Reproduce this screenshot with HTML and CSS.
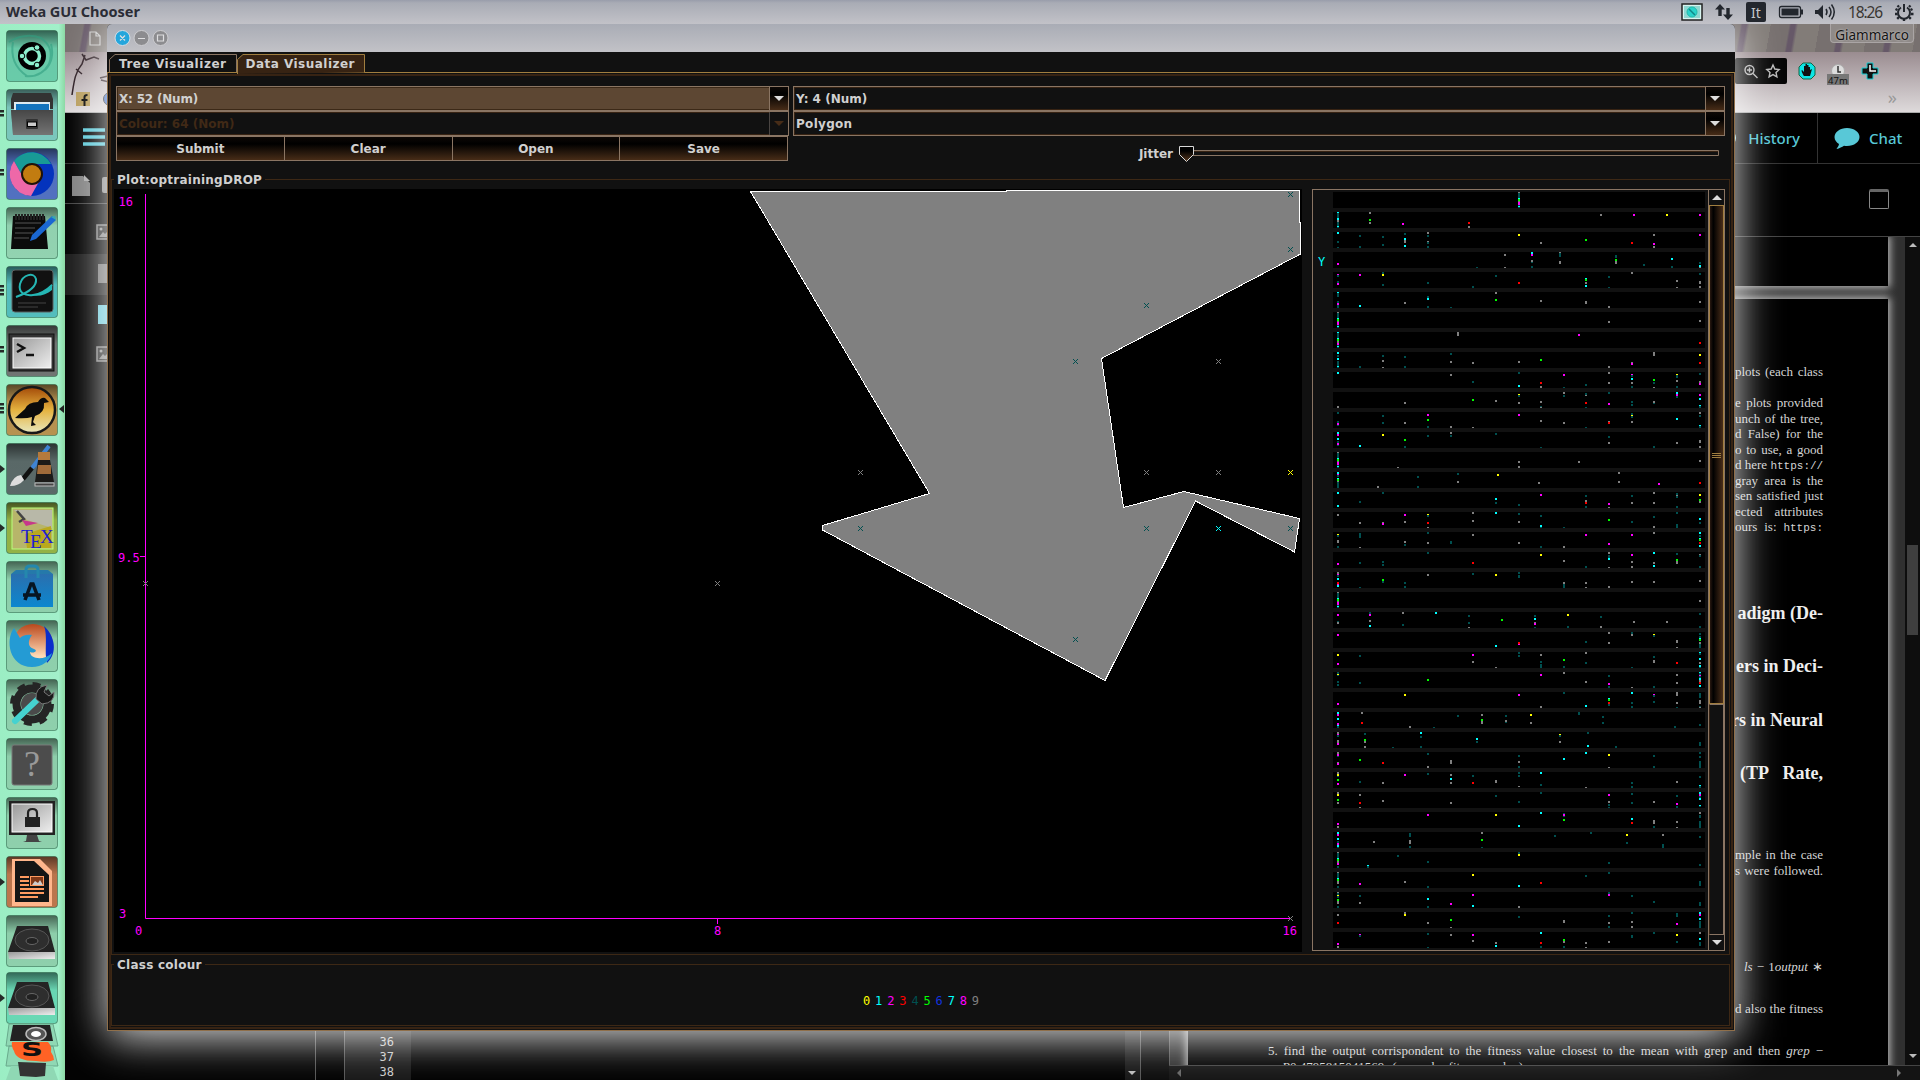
FILE: index.html
```html
<!DOCTYPE html>
<html lang="en">
<head>
<meta charset="utf-8">
<title>Weka GUI Chooser</title>
<link rel="stylesheet" href="styles.css">
</head>
<body>
<div class="desktop">

<div class="browser">
  <div class="wallpaper"><svg class="tabdoc" width="12" height="16" viewBox="0 0 12 16"><path d="M1 1h6l4 4v9H1zM7 1v4h4" fill="none" stroke="#ccc" stroke-width="1.2"/></svg><span class="user">Giammarco</span></div>
  <div class="toolbar">
    <svg class="sketch" width="44" height="61" viewBox="0 0 44 61"><path d="M7 43C9 30 10 20 17 12L20 3M17 2l4 6 8-3 5 2M11 17l6 5M35 26l8-2M36 28l8 2" fill="none" stroke="#2b1c22" stroke-width="1.5"/><rect x="11" y="40" width="14" height="14" fill="#b89d5c"/><path d="M19.500 54V45q0-2 3-2M16.500 48h6" stroke="#000" stroke-width="2" fill="none"/><circle cx="45" cy="47" r="6.500" fill="#4270c8" stroke="#333"/></svg>
    <div class="tools">
      <svg class="addr" width="52" height="26" viewBox="0 0 52 26"><rect width="52" height="26" rx="2" fill="#050505"/><g fill="none" stroke="#bbb" stroke-width="1.400"><circle cx="14.500" cy="12" r="4.500"/><path d="M18 15.500l4.500 4.500M12 12h5M14.500 9.500v5M38 7l1.800 4 4.400.5-3.200 3 .9 4.400L38 16.600l-3.900 2.300.9-4.400-3.200-3 4.400-.5z"/></g></svg>
      <svg width="110" height="34" viewBox="0 0 110 34"><path d="M6 5h8l4 4v8l-4 4H6l-4-4V9z" fill="#0de5e5" stroke="#164"/><path d="M7 18c-2-3-3-6-2-6l2 2V8h1.500V6H10v1h1.500v2H13v3l2-1-2 7z" fill="#111"/><circle cx="41" cy="13" r="6.500" fill="#ddd" stroke="#aaa"/><path d="M41 8v6h3" fill="none" stroke="#333" stroke-width="1.500"/><rect x="30" y="16" width="22" height="11" fill="#777"/><text x="41" y="25.500" font-size="9.500" text-anchor="middle" fill="#111">47m</text><path d="M70 5h6v5h5v6h-5v5h-6v-5h-5v-6h5z" fill="#111" stroke="#19cdd3"/><path d="M73 7v6h6" fill="none" stroke="#fff" stroke-width="1.500"/></svg>
      <span class="more">»</span>
    </div>
  </div>
  <div class="header">
    <svg width="22" height="20" viewBox="0 0 22 20"><path d="M0 2h22M0 9h22M0 16h22" stroke="#5bc8d8" stroke-width="3.500"/></svg>
    <div class="links"><svg class="clock" width="20" height="20" viewBox="0 0 20 20"><circle cx="10" cy="10" r="9" fill="#9adbe4"/></svg><span class="history">History</span><span class="chat"><svg width="26" height="23" viewBox="0 0 26 23"><path d="M13 1C6 1 .5 5 .5 10c0 3 2 5.500 4.500 7-.3 2-1.500 3.500-2.500 5 3-.5 5.500-2 7.500-3.200 9 1.200 15.500-3.300 15.500-8.800C25.500 5 20 1 13 1z" fill="#58c8d7"/></svg>Chat</span></div>
  </div>
  <div class="work">
    <div class="files">
      <div class="filebar"><svg width="46" height="22" viewBox="0 0 46 22"><path d="M0 1h11l7 7v13H0z" fill="#808080"/><path d="M12 0l6 6h-6z" fill="#aaa"/><rect x="30" y="2" width="14" height="16" rx="2" fill="#888"/></svg></div>
      <div class="frow"><svg width="18" height="16" viewBox="0 0 18 16"><rect x="1" y="1" width="16" height="14" fill="#2a2a2a" stroke="#888" stroke-width="1.500"/><circle cx="5" cy="5" r="1.500" fill="#999"/><path d="M3 13l4-5 2 2 4-4 4 5v2z" fill="#888"/></svg></div><div class="frow sel"><i class="fold"></i></div><div class="frow"><i class="fold blue"></i></div><div class="frow"><svg width="18" height="16" viewBox="0 0 18 16"><rect x="1" y="1" width="16" height="14" fill="#2a2a2a" stroke="#888" stroke-width="1.500"/><circle cx="5" cy="5" r="1.500" fill="#999"/><path d="M3 13l4-5 2 2 4-4 4 5v2z" fill="#888"/></svg></div>
    </div>
    <div class="editor"><div class="gutter">36<br>37<br>38</div><div class="edbar"><i class="down"></i></div></div>
    <div class="viewer">
      <div class="viewbar"><i class="box"></i></div>
      <div class="viewbody">
        <div class="pages">
          <div class="prevpage"></div>
          <div class="page">
            <p class="w88 g1">plots (each class</p>
            <p class="w88 g2">e plots provided</p><p class="w88">unch of the tree,</p><p class="w88">d False) for the</p><p class="w88">o to use, a good</p><p class="w88">d here <code>https://</code></p><p class="w88">gray area is the</p><p class="w88">sen satisfied just</p><p class="w88">ected attributes</p><p class="w88">ours is: <code>https:</code></p>
            <h3 class="g3">adigm (De-</h3><h3>ers in Deci-</h3><h3>rs in Neural</h3><h3 class="w83">(TP Rate,</h3>
            <p class="w88 g4">mple in the case</p><p class="w88">s were followed.</p>
            <p class="w78 g5"><em>ls</em> − 1<em>output</em> ∗</p>
            <p class="w88 g6">d also the fitness</p>
            <p class="w555 g7">5. find the output corrispondent to the fitness value closest to the mean with grep and then <em>grep</em> −</p>
            <p class="w245"><em>P</em>0.4795815041569 (example fitness value)</p>
          </div>
        </div>
        <div class="vscroll"><i class="up"></i><i class="thumb"></i><i class="down"></i></div>
      </div>
      <div class="hscroll"><i class="left"></i><i class="right"></i></div>
    </div>
  </div>
</div>

<div class="weka">
  <div class="titlebar"><svg width="56" height="18" viewBox="0 0 56 18"><circle cx="8.500" cy="9" r="7.500" fill="#25a6dc" stroke="#d5dde5"/><circle cx="27.500" cy="9" r="7.500" fill="#8c8c8f" stroke="#cdcdd0"/><circle cx="46.500" cy="9" r="7.500" fill="#8c8c8f" stroke="#cdcdd0"/><path d="M6 6.500l5 5m0-5l-5 5M24 9.500h7M43.500 6h6v6h-6z" fill="none" stroke="#dedee0" stroke-width="1.200"/></svg></div>
  <div class="tabs">
    <svg class="tab" width="128" height="20" viewBox="0 0 128 20"><path d="M.5 20V7.500L6 2.500h121.500V20" fill="#111" stroke="#8a7563"/><text x="10" y="16" textLength="107">Tree Visualizer</text></svg>
    <svg class="tab" width="128" height="22" viewBox="0 0 128 22"><path d="M.5 22V7.500L6 2.500h121.500V20.500" fill="#372313" stroke="#a17e3f"/><text x="8.500" y="16" textLength="109">Data Visualizer</text></svg>
  </div>
  <div class="pane">
    <div class="controls">
      <div class="colL">
        <div class="combo hot"><span>X: 52 (Num)</span><b></b></div>
        <div class="combo off"><span>Colour: 64 (Nom)</span><b></b></div>
        <div class="buttons"><span>Submit</span><span>Clear</span><span>Open</span><span>Save</span></div>
      </div>
      <div class="colR">
        <div class="combo"><span>Y: 4 (Num)</span><b></b></div>
        <div class="combo"><span class="wide">Polygon</span><b></b></div>
        <div class="jitter"><span>Jitter</span><svg width="540" height="18" viewBox="0 0 540 18"><path d="M10 5.500h529.500v5H10z" fill="#111" stroke="#8a7563"/><path d="M10 6.500h529" stroke="#372313"/><path d="M.5 1.500h14v8l-7 7-7-7z" fill="url(#kn)" stroke="#d8d8d8"/><defs><linearGradient id="kn" x2="0" y2="1"><stop offset=".3" stop-color="#000"/><stop offset="1" stop-color="#5a3a20"/></linearGradient></defs></svg></div>
      </div>
    </div>
    <div class="group plotgroup">
      <span class="legend">Plot:optrainingDROP</span>
      <svg class="plot" width="1188" height="763" viewBox="114 189 1188 763">
        <rect x="114" y="189" width="1188" height="763" fill="#000"/>
        <path d="M750.500 191.500H1006.500V190.500H1299.500V222H1300.500V254L1101.500 358.500L1123.500 507.500L1184 491.500L1299.500 518.500L1294.500 552L1195.500 501L1105 680.500L822.500 530V525.500L929.500 493.500Z" fill="#808080" stroke="#fff" shape-rendering="crispEdges"/>
        <path d="M145.500 194V918.500H1290M140 556.500h5M717.500 918v6" fill="none" stroke="#f0f"/>
        <g id="marks"></g>
        <g class="axis"><text x="118.500" y="206">16</text><text x="118" y="562">9.5</text><text x="119" y="918">3</text><text x="135" y="935">0</text><text x="714" y="935">8</text><text x="1282.500" y="935">16</text></g>
      </svg>
      <div class="matrix">
        <div class="ylab">Y</div>
        <div class="strips" id="strips"></div>
        <div class="scroll"><i class="btn upb"></i><i class="grip"></i><i class="track"></i><i class="btn dnb"></i></div>
      </div>
    </div>
    <div class="group classgroup">
      <span class="legend">Class colour</span>
      <div class="classes"><span class="c0">0</span><span class="c1">1</span><span class="c2">2</span><span class="c3">3</span><span class="c4">4</span><span class="c5">5</span><span class="c6">6</span><span class="c1">7</span><span class="c8">8</span><span class="c9">9</span></div>
    </div>
  </div>
</div>

<div class="panel">
  <strong>Weka GUI Chooser</strong>
  <svg width="240" height="24" viewBox="1680 0 240 24"><rect x="1682" y="4" width="20" height="16" fill="#d8f4f0" stroke="#222" stroke-width="1.500"/><rect x="1684" y="6" width="16" height="12" fill="#8fd8d2"/><circle cx="1692" cy="12" r="5" fill="#29d3cb" stroke="#2ba"/><path d="M1689 9l6 6" stroke="#188" stroke-width="1.500"/><path d="M1720 4l5 5.500h-3.300V16h-3.400V9.500H1715zM1728 20l-5-5.500h3.300V8h3.400v6.500h3.300z" fill="#23272e"/><rect x="1746" y="2" width="20" height="20" rx="2" fill="#23272e"/><text x="1756" y="17.500" text-anchor="middle" font-size="14" fill="#c4c5c9">It</text><rect x="1779.500" y="6.500" width="21" height="11" rx="2" fill="none" stroke="#23272e" stroke-width="1.300"/><rect x="1781.500" y="8.500" width="17" height="7" fill="#23272e"/><path d="M1802 9.500v5" stroke="#23272e" stroke-width="2"/><path d="M1815 10h3l5-5v14l-5-5h-3z" fill="#23272e"/><path d="M1826 9q2 3 0 6M1829 7q4 5 0 10M1831.500 4.500q5.500 7.500 0 15" fill="none" stroke="#23272e" stroke-width="1.500"/><text x="1848" y="17.500" font-size="15.500" textLength="35" fill="#3a3733">18:26</text><g fill="none" stroke="#23272e"><path d="M1901 7.500a6 6 0 1 0 6 0M1904 4v8" stroke-width="2"/><path d="M1910.500 10l2-1M1911 14h2.500M1909 17l1.800 1.800M1904 18.500v2.500M1899 17l-1.800 1.800M1897.500 14h-2.500M1897.500 10l-2-1M1899 7l-1.500-1.500M1909 7l1.500-1.500" stroke-width="2.400"/></g></svg>
</div>

<div class="launcher">
  <svg width="65" height="1056" viewBox="0 24 65 1056">
    <defs>
      <linearGradient id="sh" x2="0" y2="1"><stop stop-color="#000" stop-opacity=".55"/><stop offset=".35" stop-color="#000" stop-opacity=".07"/><stop offset="1" stop-color="#000" stop-opacity=".06"/></linearGradient>
      <linearGradient id="dk" x2="0" y2="1"><stop stop-color="#151515"/><stop offset="1" stop-color="#707070"/></linearGradient>
      <linearGradient id="lt" x2="1" y2="1"><stop stop-color="#999"/><stop offset="1" stop-color="#eee"/></linearGradient>
      <linearGradient id="or" x2="0" y2="1"><stop stop-color="#a34a08"/><stop offset=".5" stop-color="#e5b23f"/><stop offset="1" stop-color="#e8e8bd"/></linearGradient>
      <linearGradient id="bl" x2="0" y2="1"><stop stop-color="#2a6fae"/><stop offset="1" stop-color="#0c87cf"/></linearGradient>
      <linearGradient id="ff" x2="0" y2="1"><stop stop-color="#b9481c"/><stop offset=".8" stop-color="#ffd9b5"/></linearGradient>
      <g id="hdd"><path d="M13 11h31l7 26H4z" fill="#242424"/><path d="M4 37h47v7H5z" fill="url(#lt)"/><ellipse cx="28" cy="25" rx="17" ry="11" fill="#2e2e2e" stroke="#555"/><ellipse cx="28" cy="26" rx="6" ry="3.500" fill="#222" stroke="#666"/></g>
    </defs>
    <g id="tiles"></g>
    <g transform="translate(5 30)"><path d="M4 12Q20 2 36 8Q50 18 44 34Q36 48 20 46M8 12Q4 34 22 46M46 14Q50 30 40 40" fill="none" stroke="#319f81" stroke-width="2" opacity=".6"/><circle cx="27" cy="26" r="14" fill="#000"/><circle cx="27" cy="26" r="7.500" fill="none" stroke="#8ef0cf" stroke-width="3.500"/><g fill="#8ef0cf" stroke="#000"><circle cx="17" cy="26" r="2.800"/><circle cx="32" cy="17.500" r="2.800"/><circle cx="32" cy="35" r="2.800"/></g></g>
    <g transform="translate(5 89)"><path d="M8 4h38l2 6v10H6V10z" fill="#333"/><path d="M9 13h36v10H9z" fill="#dfeaf0"/><path d="M11 15h33v7H11z" fill="#1473bd"/><path d="M6 21h42v25H8z" fill="url(#dk)"/><path d="M6 21h42v25H8z" fill="#777" opacity=".5"/><rect x="21" y="30" width="12" height="10" rx="1" fill="#333"/><rect x="22.500" y="33" width="9" height="4.500" fill="#ccc" stroke="#000"/></g>
    <g transform="translate(5 148)"><circle cx="27" cy="26" r="22" fill="#0433bd"/><path d="M9 13a22 22 0 0 1 37 3H27l-10 11z" fill="#189a96"/><path d="M9 13a22 22 0 0 0 17 35l10-18-18-1z" fill="#ee68a8"/><circle cx="27" cy="26" r="10" fill="#c27c10" stroke="#201208" stroke-width="2"/></g>
    <g transform="translate(5 207)"><path d="M8 9h32l3 33H6z" fill="#0b0b0b"/><path d="M11 7v6M14 7v6M17 7v6M20 7v6M23 7v6M26 7v6M29 7v6M32 7v6M35 7v6M38 7v6" stroke="#222" stroke-width="2"/><path d="M10 16h26M10 21h20M10 26h18M9 31h15" stroke="#555"/><path d="M47 9l4 4-20 19-6 2 2-6z" fill="#1a67d2"/><path d="M46 10l4-1 1 4" fill="#32a8b5"/></g>
    <g transform="translate(5 266)"><rect x="7" y="4" width="41" height="42" rx="3" fill="#111" stroke="#5b6161"/><path d="M11 31C22 27 32 21 31 13C29 6 18 8 15 18C13 27 20 30 28 29C36 28 42 24 47 19" fill="none" stroke="#25b6b4" stroke-width="2"/><path d="M24 29C34 29 41 25 47 18V24C41 29 34 31 24 29z" fill="#25b6b4"/><path d="M13 37h28M13 41h20" stroke="#444"/></g>
    <g transform="translate(5 325)"><rect x="4" y="9" width="45" height="37" fill="#333" stroke="#111"/><rect x="8" y="13" width="38" height="30" fill="url(#lt)" stroke="#fff"/><path d="M12 19l7 4-7 4M21 30h8" fill="none" stroke="#111" stroke-width="2.500"/></g>
    <g transform="translate(5 384)"><circle cx="27" cy="26" r="23" fill="url(#or)" stroke="#181818" stroke-width="2.500"/><path d="M10 34l10-9q3-7 13-7 3-5 7-4l4 4-5 1q1 10-9 13l-2 6 3 3-5 1 1-9q-6 2-17 1z" fill="#0b0b0b"/></g>
    <g transform="translate(5 443)"><path d="M45 3l-14 21-7 5 4-8z" fill="#3577c4"/><path d="M44 3L27 25" stroke="#3f83d2" stroke-width="4"/><path d="M27 25l-9 11" stroke="#111" stroke-width="4.500"/><path d="M5 43q3-10 11-11l3 5q-5 6-14 6z" fill="#ddd"/><path d="M33 9h12v8H33z" fill="#b57a3d"/><path d="M33 17h12l4 22H30z" fill="#1b1a18"/><path d="M33 22h13v9H32z" fill="#a06b3a"/><rect x="30" y="40" width="19" height="3" fill="#444" stroke="#bbb"/></g>
    <g transform="translate(5 502)"><rect x="7" y="6" width="41" height="41" fill="#b7b56a" stroke="#b9ff7d"/><path d="M9 8h38v18L22 18z" fill="#b8b8a8"/><path d="M20 32L46 24V46H22z" fill="#b9a81e"/><path d="M12 9l7 8-5 3" stroke="#444" stroke-width="2.500" fill="none"/><path d="M17 18l16 3-12 3z" fill="#c7388c"/><g fill="#1f21d2" font-family="Liberation Serif" font-size="19"><text x="16" y="41">T</text><text x="25" y="46">E</text><text x="35" y="41">X</text></g></g>
    <g transform="translate(5 561)"><path d="M6 13h42v33H6z" fill="url(#bl)"/><path d="M6 13l5-4h32l5 4" fill="#2579aa"/><path d="M21 17v-8q0-4 4-4h4q4 0 4 4v8" fill="none" stroke="#2488ad" stroke-width="3"/><path d="M20 39l6-16h2l6 16M18 34h18" fill="none" stroke="#071523" stroke-width="3.500"/></g>
    <g transform="translate(5 620)"><circle cx="28" cy="24" r="20" fill="url(#ff)"/><path d="M39 6c11 10 14 27 3 37-3-10 1-28-3-37z" fill="#0a2ecb"/><path d="M9 8C0 20 4 47 27 47c10 0 18-6 20-14-8 8-22 6-22-1 5 2 8-2 4-3-7-2-6-9-2-14-6-1-10 1-12 3z" fill="#249bd4"/></g>
    <g transform="translate(5 679)"><circle cx="27" cy="25" r="15.500" fill="none" stroke="#252525" stroke-width="8"/><circle cx="27" cy="25" r="19" fill="none" stroke="#252525" stroke-width="6" stroke-dasharray="7.500 7.420"/><circle cx="27" cy="25" r="11" fill="#4a4a4a"/><path d="M10 42L34 19" stroke="#45d2d0" stroke-width="6" stroke-linecap="round"/><path d="M31 20q-1-12 11-14l-3 7 5 4 5-4q1 11-12 12z" fill="#1a1a1a" stroke="#777"/></g>
    <g transform="translate(5 738)"><rect x="7" y="7" width="40" height="40" rx="2" fill="#4c4c4c" stroke="#777"/><text x="27" y="38" text-anchor="middle" font-family="Liberation Serif" font-size="36" fill="#999">?</text></g>
    <g transform="translate(5 797)"><rect x="4" y="4" width="46" height="34" fill="#222"/><rect x="7" y="7" width="40" height="28" fill="url(#lt)" stroke="#fff"/><rect x="20" y="20" width="15" height="10" fill="#222"/><path d="M23 20v-4q0-4 4.500-4t4.500 4v4" fill="none" stroke="#222" stroke-width="2.200"/><path d="M22 38h10l2 6 3 1H18l3-1z" fill="#444"/></g>
    <g transform="translate(5 856)"><path d="M7 3h28l12 12v35H7z" fill="#ffb68c"/><path d="M10 5h19l15 14v27H10z" fill="#151515"/><path d="M15 21h9M15 25h9M15 29h9M15 33h24M15 37h24M15 41h18" stroke="#ff9a60" stroke-width="2"/><rect x="25.500" y="20.500" width="13" height="9" fill="#803818" stroke="#ff9a60"/><path d="M27 29l3-4 3 2 2-3 3 5z" fill="#ccc"/></g>
    <use href="#hdd" x="4" y="915"/><use href="#hdd" x="4" y="971"/>
    <path d="M9 1024h44l5 22H6zM9 1046h44l5 20H6z" fill="#8fd8b4" stroke="#69aa8c"/><path d="M13 1025h37l3 16H10z" fill="#222"/><ellipse cx="36" cy="1034" rx="10" ry="6.500" fill="#555" stroke="#bbb" stroke-width="1.500"/><ellipse cx="36" cy="1034" rx="5" ry="3" fill="#fff"/><path d="M12 1042h36q4 4 3 10 3 4 3 8-6 3-18 1-20 0-22-10-3-5-2-9z" fill="#ff6225"/><text x="32" y="1056" text-anchor="middle" font-weight="bold" font-size="19" textLength="22" lengthAdjust="spacingAndGlyphs" fill="#111">S</text><path d="M11 1066h42l5 14H6z" fill="#8fd8b4"/><path d="M18 1062l28 1-1 13-9 1-16-1z" fill="#333"/>
    <g id="pips" fill="#252a28"></g>
    <path d="M64 405l-5 4 5 4z" fill="#222"/>
  </svg>
</div>
</div>
<script src="plot.js"></script>
</body>
</html>
```
FILE: styles.css
```css
* { box-sizing: border-box; }
body { margin: 0; background: #000; font-family: "DejaVu Sans", sans-serif; }
p, h3 { margin: 0; }
i, b { display: block; }
svg { display: block; flex: none; }
.desktop { position: relative; width: 1920px; height: 1080px; overflow: hidden; background: #000; }

.panel { position: absolute; left: 0; top: 0; width: 1920px; height: 24px; display: flex; justify-content: space-between; background: linear-gradient(#999dab 0, #a9acb5 3px, #c2c2c8); font-family: "Noto Sans", sans-serif; }
.panel strong { padding-left: 6px; font-size: 14.5px; line-height: 23px; color: #2b2c35; }
.launcher { position: absolute; left: 0; top: 24px; width: 65px; height: 1056px; background: linear-gradient(90deg, #9beec4, #a2f0ca 90%, #8cd9a4); }

.browser { position: absolute; left: 65px; top: 24px; width: 1855px; height: 1056px; display: flex; flex-direction: column; font-family: "Noto Sans", sans-serif; }
.wallpaper { height: 28px; display: flex; justify-content: space-between; padding: 0 6px 0 24px; background: repeating-linear-gradient(100deg, #77706f 0 18px, #665868 20px 24px, #827c78 27px 48px); }
.tabdoc { margin-top: 7px; }
.user { height: 19px; width: 84px; text-align: center; font-size: 13.5px; line-height: 22px; color: #141414; background: #8f8a88; border: 1px solid #aaa5a5; border-top: 0; border-radius: 0 0 4px 4px; text-shadow: 0 0 2px #ddd; }
.toolbar { height: 61px; display: flex; justify-content: space-between; background: linear-gradient(#9a8c90, #bdb4b7 50%, #dedadb); border-bottom: 1px solid #aaa; }
.tools { width: 185px; display: flex; position: relative; }
.addr { margin-top: 6px; }
.tools svg + svg { margin: 6px 0 0 10px; }
.more { position: absolute; right: 23px; top: 34px; color: #999; font-size: 18px; line-height: 22px; }
.header { height: 51px; display: flex; justify-content: space-between; align-items: center; padding-left: 18px; border-bottom: 1px solid #333; background: #000; }
.links { display: flex; align-items: center; color: #58c8d7; font-size: 15px; font-weight: 500; height: 50px; line-height: 50px; }
.clock { margin-right: 11px; }
.history { padding-right: 17px; border-right: 1px solid #333; }
.chat { width: 102px; display: flex; align-items: center; gap: 9px; padding-left: 16px; }
.work { flex: 1; display: flex; background: #000; min-height: 0; }
.files { width: 250px; background: #030303; }
.filebar { height: 40px; padding: 11px 7px; border-bottom: 1px solid #444; }
.frow { height: 41px; padding: 10px 0 0 31px; }
.frow:nth-child(2) { height: 50px; padding-top: 20px; }
.sel { background: #1b1b1b; }
.fold { width: 18px; height: 19px; background: #777; margin-left: 2px; }
.blue { background: #6fc9d8; }
.editor { width: 826px; display: flex; justify-content: space-between; border-left: 1px solid #555; }
.gutter { width: 95px; padding: 871px 17px 0 0; text-align: right; font: 12px/15px "DejaVu Sans Mono", monospace; color: #ccc; background: linear-gradient(90deg, #000 28px, #555 28px 29px, #171717 29px); }
.edbar { width: 16px; background: #151515; border-right: 1px solid #555; padding: 907px 0 0 3px; }
.down, .up, .left, .right { width: 0; height: 0; border: 4px solid transparent; }
.down { border-top-color: #bbb; } .up { border-bottom-color: #bbb; } .left { border-right-color: #666; } .right { border-left-color: #777; }
.viewer { flex: 1; display: flex; flex-direction: column; padding-left: 28px; background: #0c0c0c; min-width: 0; }
.viewbar { height: 73px; background: #000; border-bottom: 1px solid #444; display: flex; justify-content: flex-end; padding: 25px 31px 0; }
.box { width: 20px; height: 20px; border: 1px solid #888; border-top: 3px solid #666; border-radius: 2px; }
.viewbody { height: 829px; display: flex; justify-content: flex-end; overflow: hidden; border-left: 1px solid #555; }
.pages { flex: 1; padding: 0 17px 0 18px; background: #303030; }
.prevpage { height: 49px; background: #000; box-shadow: 0 0 8px 2px #bbb; }
.page { height: 790px; margin-top: 13px; background: #000; box-shadow: 0 0 8px 2px #bbb; padding-right: 65px; font: 13px/15.5px "Liberation Serif", serif; color: #d4d4d4; display: flex; flex-direction: column; align-items: flex-end; }
.page p { height: 15.5px; flex: none; white-space: nowrap; text-align: justify; text-align-last: justify; }
.page code { font: 11px "Liberation Mono", monospace; }
.w88 { width: 88px; } .w78 { width: 79px; } .w83 { width: 83px; } .page .w555 { width: 555px; }
.page .w245 { width: 241px; margin-right: 300px; }
.g1 { margin-top: 65px; } .g2 { margin-top: 16px; }
.page h3 { height: 23px; margin-bottom: 30.300px; font-size: 18px; line-height: 23px; white-space: nowrap; text-align-last: justify; flex: none; color: #eee; }
.page .g3 { margin-top: 67px; }
.g4 { margin-top: 32px; } .g5 { margin-top: 81px; } .g6 { margin-top: 26px; } .g7 { margin-top: 27px; }
.vscroll { width: 15px; background: #0e0e0e; display: flex; flex-direction: column; align-items: center; padding: 2px 2px 3px; }
.vscroll .thumb { width: 11px; height: 90px; margin-top: 298px; background: #3f3f3f; }
.vscroll .down { margin-top: auto; }
.hscroll { height: 15px; background: #141414; border-top: 1px solid #444; display: flex; justify-content: space-between; padding: 3px 15px 0 4px; }

.weka { position: absolute; left: 107px; top: 24px; width: 1628px; height: 1007px; background: #111; box-shadow: 0 6px 44px rgba(255,255,255,.9); display: flex; flex-direction: column; font-weight: bold; font-size: 12px; color: #d0d0d0; border-radius: 5px 5px 0 0; overflow: visible; }
.titlebar { height: 28px; padding: 5px 7px; border-radius: 5px 5px 0 0; background: linear-gradient(#a9acb5, #c2c2c7); }
.tabs { height: 20px; display: flex; padding-left: 2px; }
.tab { overflow: visible; fill: #d0d0d0; position: relative; z-index: 1; }
.pane { flex: 1; border: 1px solid #8f6f4a; border-top-color: #a17e3f; outline: 2px solid #372313; outline-offset: -4px; padding: 13px 4px 0 3px; display: flex; flex-direction: column; }
.controls { display: flex; gap: 4px; padding: 0 5px; height: 93px; }
.colL { width: 673px; }
.colR { width: 932px; }
.combo { height: 25px; display: flex; border: 1px solid #8a7563; box-shadow: inset 0 0 0 1px #372313; }
.combo span { flex: 1; padding-left: 2px; line-height: 25px; }
.combo .wide { letter-spacing: .3px; }
.combo b { width: 19px; border-left: 1px solid #8a7563; background: linear-gradient(#0d0805, #000 30%, #472c17); display: grid; place-items: center; }
.combo b::after { content: ""; border: 5px solid transparent; border-top-color: #ddd; border-bottom: 0; }
.hot { background: #5d4733; box-shadow: inset 0 0 0 1px #3c2917; letter-spacing: -.2px; }
.off { color: #402916; }
.off b { background: #111; border-color: #4a4542; } .off b::after { border-top-color: #472c17; }
.buttons { display: flex; width: 672px; height: 25px; border: 1px solid #8a7563; }
.buttons span { flex: 1; text-align: center; line-height: 24px; background: linear-gradient(#0d0805, #000 30%, #472c17); }
.buttons span + span { border-left: 1px solid #8a7563; }
.jitter { display: flex; justify-content: flex-end; gap: 6px; padding: 9px 6px 0 0; line-height: 18px; }
.group { position: relative; border: 1px solid #3d2815; }
.legend { position: absolute; left: 2px; top: -9px; padding: 0 3px; line-height: 18px; background: #111; white-space: nowrap; letter-spacing: .25px; }
.plotgroup { height: 776px; display: flex; padding: 9px 4px 0 2px; gap: 10px; }
.axis { font: 12px "DejaVu Sans Mono", monospace; fill: #f0f; }
.matrix { width: 413px; height: 762px; border: 1px solid #8a7563; display: flex; }
.ylab { width: 20px; padding: 62px 0 0 5px; font: 12px/20px "DejaVu Sans Mono", monospace; color: #0ff; }
.strips { width: 372px; padding-top: 2px; display: flex; flex-direction: column; gap: 4px; }
.strips svg { background: #000; }
.scroll { margin-left: 3px; width: 16px; border-left: 1px solid #8a7563; display: flex; flex-direction: column; }
.btn { height: 15px; display: grid; place-items: center; }
.btn::after { content: ""; border: 5px solid transparent; }
.upb::after { border-bottom-color: #ddd; border-top: 0; } .dnb::after { border-top-color: #ddd; border-bottom: 0; }
.grip { height: 499px; border: 1px solid #a17e3f; background: linear-gradient(#a17e3f 0 1px, transparent 1px 2px, #a17e3f 2px 3px, transparent 3px 4px, #a17e3f 4px) 50% 247px / 9px 5px no-repeat, linear-gradient(90deg, #281810, #000 25%, #4a2e19); }
.track { flex: 1; border: 1px solid #8a7563; border-left-color: #372313; }
.classgroup { margin-top: 9px; height: 62px; }
.classes { display: flex; width: 121px; margin: 26px 0 0 751px; font: 12px/20px "DejaVu Sans Mono", monospace; }
.classes span { width: 12.100px; }
.c0 { color: #ff0; } .c1 { color: #0ff; } .c2 { color: #f0f; } .c3 { color: #f00; } .c4 { color: #005050; } .c5 { color: #0f0; } .c6 { color: #1133dd; } .c8 { color: #f0f; } .c9 { color: #808080; }
```
FILE: plot.js
```js
const NS = "http://www.w3.org/2000/svg";
const COLORS = {w: "#808080", t: "#005050", c: "#00ffff", m: "#ff00ff", y: "#ffff00", r: "#ff0000", G: "#00ff00"};
function add(parent, tag, attrs) {
  const el = document.createElementNS(NS, tag);
  for (const k in attrs) el.setAttribute(k, attrs[k]);
  parent.appendChild(el);
  return el;
}

// Instances in the scatter plot, each a five-pixel cross
const marks = [[1290,194,"t"],[1290,249,"t"],[1146,305,"t"],[1075,361,"t"],[1218,361,"w"],[860,472,"w"],[1146,472,"w"],[1218,472,"w"],[1290,472,"y"],[860,528,"t"],[1146,528,"t"],[1218,528,"c"],[1290,528,"t"],[1075,639,"t"],[717,583,"w"],[145,583,"w"],[1290,918,"w"]];
for (const [x, y, c] of marks) {
  let d = "";
  for (let k = -2; k <= 2; k++) for (const s of [k, -k]) d += `M${x + k} ${y + s}h1v1h-1z`;
  add(document.getElementById("marks"), "path", {d, fill: COLORS[c]});
}

// One line per attribute; a letter is one of 17 even columns, a number is a pixel column.
// Each dot is colour + top, with "xN" for runs of another height.
const F = "w0x1,t1x5,c6x1,G7,w9x1,m10x3,t13x1,c14x1,t15x1";
const rows = `i:${F}
a:c0x1,t1x5,c6,w8,t10x4,c14x1,t15x1 36:w0,G7,w10 69:m11 135:r10,w14 267:w2 300:m2 333:y2 q:m2
a:c0,t9,t15x1 b:t3,t14 c:t4,t12 d:t1,c6,w8x3,c13 e:w0,t3,w9x1,t10,t14 i:y2 j:w10 l:G7 n:r10 o:w2,m11,w14 q:m2
a:m11 143:t15x1 171:w2,w15x1 198:c0,m2,w8,t10x1,t14 226:w0x1,t1x4,w9x3 282:t3x3,G7,w9x3 310:t12 338:c6,t14 q:t10,c13,w15x1
a:m2x1,t3,t9,m11 b:m2 c:t0,y2,t12 e:t10 g:t14 h:t3 i:r10 l:c6x1,G7,w10,c13 m:t4,t15x1 n:w0 p:w8,w15x1 q:t1,w9x3,w14
a:c0x1,t1x4,t9,m11,t13x3 b:c13 d:w10 e:t4,c6,t14 f:t15x1 h:w0,G7 j:w8 l:w9x3 m:w14 q:w9
a:${F} m:w9 q:w8
a:c0x1,t1x5,c6x1,G7,w9x2,m11,t13x1,c14x1,t15x1 124:w0x4 245:m2 q:r10
a:c0,t3,c6,t9x5,c14x1,t15x1 b:t14 c:t3,w8,w15x1 d:t4,t14 f:t1,w9 g:w10 i:w9 j:G7 m:w14 n:w10x1,m11 o:w0x4 q:y2,r10
a:c0 f:w2 g:t9 i:t0,c13 j:r10,w14 k:m2,t15x1 l:t12 m:w0,w10 n:m2x1,t3,c6,w10,t14 o:G7,t10,w15x1 p:y2x1,t3x3,w8,t14 q:t1,w9,m11
a:w14 d:w10 g:G7 h:w8 i:y2x1,t3,w10 j:w9,t14x1,w15x1 k:w0,t3 l:t1,w3x1,r10,t15x1 m:t0,m11 n:t9,t12 o:w9,t11x1 p:c0,m2,t4 q:m2,c6,c13x1,t14
a:t0,t9,m11,t13x1 c:t3,t10 d:w10 e:m2,G7,t14 f:w14 g:w15x1 i:m2 j:w8 k:w10 l:t15x1 m:w9x1,r10 n:t1,y3x1,t4,w9 p:c6 q:w0,t3,c13x1,t14
a:c0,m2,c6,t9,m11,t13x1 b:c13 c:y2 d:G7,t14 e:t3 f:w0,t3 h:t1 j:t15x1 m:t4,w10 o:t14 p:w10 q:w8x3,w14
a:${F} 64:w15x1 i:w9,w14 245:w9 q:w8
a:c0,m2,t3,c6x1,G7,w9x1,t10x6 44:w14 84:t4,t14 124:t1,w9 164:y2 205:w10 285:w0,w9 325:m11 q:r10
a:c0,c13 b:t9 c:t0 h:c6,t10 i:t12 j:m2 l:t3,w8,r10,t14 m:m11,w15x1 n:t3,w10 o:w0,w10 p:t1,w3x1,t4,t14 q:y2,G7,w9
a:w2 b:w10 c:w10x1,m11 d:m2,w9 e:y2x1,t3,r10,w15x1 g:w0,w8 h:c0 i:t1,w9 j:t3,c13,t15x1 k:t15x1 m:G7 n:t9 o:t4,w14 p:t0,t12x4 q:c6,t10
a:y2x1,t3,w8x3,t14 b:t1x5,w15x1 d:w9,t12 e:t0,w10 f:t9x3 g:w2 i:w10 j:t14 k:w14 l:m2 m:m11 n:m2 o:w0 q:c0,t3,c6,G7,r10,c13
a:m11 b:t10 c:t9,t12 e:t0 g:r10 j:y2 k:w8 l:t14 m:w0,t3x3,c6,w15x1 n:m2,w9,w14 o:c0,w10,c13 p:t1,G7,w9x3 q:w2x1,t3,t14
a:w0,m2,t3,c6,r10,m12x1,c13 b:t15x1 c:G7,t9 d:t10,t14 e:w2 g:t1 h:y2 i:t0,t3x3 k:w10,t12x4 l:w10,w15x1 m:w14 n:w9 o:w9 q:w8
a:${F} q:w8
a:m2,t9x1,w10 36:t0,m2,w8,c13 69:w0,t12 102:c0 135:t3,t10,w15x1 168:G7 201:t3,c6,w10x1,m11,t15x1 234:y2,t14 267:t4,w14 300:w9 333:w9 q:t1,t14
a:m2 h:c13 i:r10,m12x1 l:t9 m:w0,w10 n:t0,w2 o:y2x1,t3 p:w8x3,w15x1 q:t1,t4,c6x1,G7,w10,t12x4
a:y2,m11 b:t3 g:m2,w9 h:w15x1 i:t0,t3 j:w2,t9,t12x4 k:G7,t14 l:w0,t10 n:t15x1 o:t4,w8x3 p:r10 q:c0x1,t1,c6,w10,c13,t15x1
a:t0,y2x1,t3x1,t9,t12 b:t10 e:G7 j:m2 k:w0 l:w9 m:t3,m11,t14 n:w15x1 o:t14 p:w2,w10 q:c0x1,t1,m3x1,t4,c6,w8,r10,c13
a:m11 d:y2 i:m2 j:w14 k:t0 l:c13 m:c6x1,G7,r10,t12 n:c0,t10,t14 o:m2x1,t3,t9 p:w0x4,w10,t15x1 q:t1x5,w8x4,t14x1,w15x1
a:c0,m2,c6,m11,c13x1,t14 28:w0,r10 76:w14 100:t15x1 124:t3 148:w2,G7,w9x3 172:t3,w8,t10x1 197:y2,w10 245:t0x3 269:t4,t10 341:t14 q:t12
a:w0,m2x1,t3,w8x3,m11 31:t1,G7,w9,w14 59:t15x1 87:c0,t4,t14 143:c6,t9 226:y2x1,t3,w9 254:t0,c13 282:t14 q:t10x4
a:w0,m2,t4x1,w10x1,m11 b:G7 c:r10 e:t1,w14 f:w8x4 i:t3,w9,t14 k:c6 l:c0 m:y2,w15x1 o:t3,t14 q:t0,t4,t9x7
a:w0,y2,t4x1,G7,m11 b:t9 c:w10 d:m2 e:t1 f:w2,c6,w10 g:t3,r10 h:w8x3 i:t0,t3,w14x1 j:c0,t12 l:w15x1 n:t10,t14 p:w9 q:t4,c13x1,t14
a:w0,y2,G7,w10 b:w2,r10,w15x1 c:w8 f:w10 h:t3 i:t9 j:t0 m:m2,w9,t12,t15x1 n:t1,t10 o:w9 p:t3,m11,t14 q:c0,m2,t4,c6,c13x1,t14x1
a:m11,w14 e:m2 h:y2 i:c13 j:c0 k:t1x1,m2,t4x1,G7 n:c6,r10 o:w8x4,t14 p:w9,w15x1 q:w0,t3x3,t9x7
a:c0,m2,c6,t9,m11,c13,t15x1 40:w9 76:t1x4,w8x4,t14 148:w0,G7,t15x1 221:t3 257:t0 293:y2,t10 329:w2,t12x4 q:t4
a:w0x1,t1x5,c6x1,G7,w9,m11,t14 34:c13x1,t14 64:t3 e:t9 i:t0,y2 m:t10 q:t12
a:w0x1,t1x5,c6x1,G7,w9x3,t14 b:m11 d:w9 e:t14 g:y2 i:c13 j:r10 l:t3 m:t0 q:t9x5
a:w0x1,t1,y3x1,t4,G7,w9x3,t14 b:t3,w10 e:c6,t14 f:m11 g:m2,c13 i:w14 m:t0,m2 n:t3 o:t9 q:t10x4
a:w2,r10 d:w0,y2 e:w10 f:G7,w15x1 i:t4 k:w8x3 m:t3,w10,t14 n:t0,w9,w14 p:t1x4,m11 q:c0,m2,c6,t9x7
a:m11,w14 b:m2x1,t3 e:t1,t15x1 f:w2 g:m2,w8 h:w10,c13 j:c0,r10,t14 k:G7,w9,t14 l:w10,w15x1 m:w9 n:t3x3 o:t0 p:y2,t9 q:w0,c6,t10x4`;
const GRID = [4, 26, 49, 71, 94, 117, 139, 162, 185, 207, 230, 252, 275, 298, 320, 343, 366];
for (const row of rows.split("\n")) {
  const svg = add(document.getElementById("strips"), "svg", {width: 372, height: 16});
  for (const col of row.split(" ")) {
    const [key, dots] = col.split(":");
    const x = isNaN(key) ? GRID[key.charCodeAt(0) - 97] : +key;
    for (const dot of dots.split(",")) {
      const [top, run] = dot.slice(1).split("x");
      add(svg, "rect", {x, y: top, width: 2, height: run || 2, fill: COLORS[dot[0]]});
    }
  }
}

// Launcher tile backgrounds and the running-window pips at their left
const tiles = ["#70d8b4", "#82d3c8", "#5778cc", "#9be0bc", "#58c9c9", "#777c7a", "#c29b55", "#60706f", "#9cbd4a", "#97ddb7", "#97ddb7", "#97ddb7", "#97ddb7", "#97ddb7", "#c87d52", "#97ddb7", "#70e6c0"];
tiles.forEach((fill, i) => {
  const y = i === 16 ? 972 : 30 + 59 * i;
  for (const f of [fill, "url(#sh)"])
    add(document.getElementById("tiles"), "rect", {x: 6.5, y: y + .5, width: 51, height: 51, rx: 3, fill: f, stroke: "rgba(60,120,90,.4)"});
});
const pips = document.getElementById("pips");
for (const [i, n] of [[1, 2], [2, 2], [4, 3], [5, 2], [6, 3]])
  for (let k = 0; k < n; k++) add(pips, "rect", {x: 0, y: 30 + 59 * i + 25 - n * 2 + k * 4, width: 4, height: 2.5});
for (const y of [468, 527, 881, 997]) add(pips, "path", {d: `M0 ${y - 3}l5 4l-5 4z`});
```
